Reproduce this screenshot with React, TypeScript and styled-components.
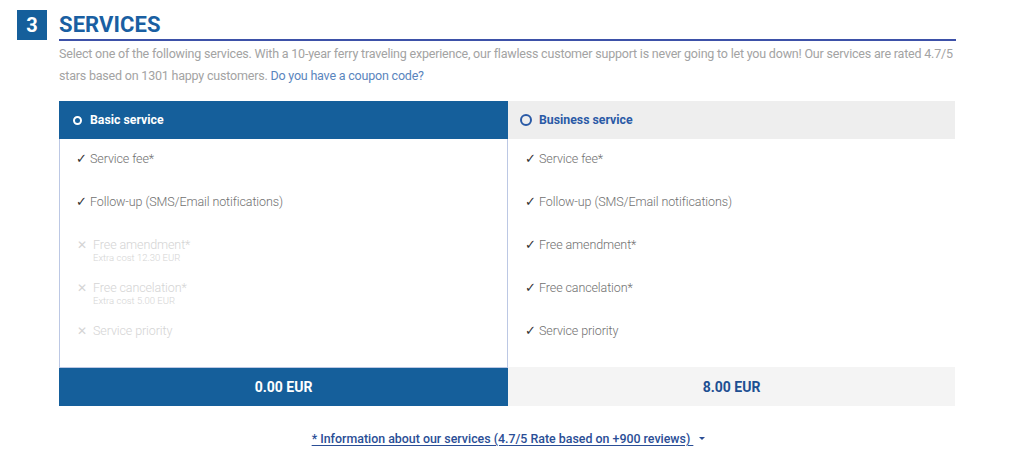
import React from "react";
import styled, { createGlobalStyle } from "styled-components";

const Global = createGlobalStyle`
  html, body { margin: 0; padding: 0; background: #fff; }
  body { font-family: Roboto, "Liberation Sans", Arial, sans-serif; }
  * { box-sizing: border-box; }
`;

const Page = styled.div`
  width: 1024px;
  height: 472px;
  padding: 10px 68px 0 17px;
  display: flex;
  gap: 12px;
  align-items: flex-start;
`;

const StepBox = styled.div`
  width: 30px;
  height: 30px;
  flex: none;
  background: #155f9b;
  color: #fff;
  font-weight: 700;
  font-size: 20px;
  display: flex;
  align-items: center;
  justify-content: center;
`;

const Content = styled.div`
  flex: 1;
  min-width: 0;
`;

const Heading = styled.h2`
  margin: 0;
  height: 29px;
  line-height: 30px;
  font-size: 22px;
  font-weight: 700;
  color: #1a5fa2;
  letter-spacing: 0.1px;
  border-bottom: 2px solid #3d51a8;
  box-sizing: content-box;
`;

const Intro = styled.p`
  margin: 2px -4px 0 0;
  font-size: 12.5px;
  letter-spacing: -0.2px;
  line-height: 22px;
  font-weight: 400;
  color: #a3a3a3;
`;

const IntroLink = styled.a`
  color: #5a85bd;
  text-decoration: none;
`;

const Plans = styled.div`
  margin-top: 14px;
  display: grid;
  grid-template-columns: 449px 448px;
`;

const Plan = styled.div<{ $active?: boolean }>`
  display: flex;
  flex-direction: column;
  border: 1px solid ${(p) => (p.$active ? "#bcc8e4" : "transparent")};
  border-left-width: ${(p) => (p.$active ? "1px" : "0")};
  border-top: none;
  ${(p) => !p.$active && "border-bottom: none;"}
`;

const PlanHeader = styled.div<{ $active?: boolean }>`
  height: 38px;
  margin: 0 ${(p) => (p.$active ? "-1px" : "0")};
  background: ${(p) => (p.$active ? "#155f9b" : "#eeeeee")};
  color: ${(p) => (p.$active ? "#fff" : "#2a5aa6")};
  display: flex;
  align-items: center;
  font-size: 12.3px;
  font-weight: 700;
`;

const RadioSlot = styled.span`
  width: 31px;
  flex: none;
  display: flex;
  justify-content: center;
  padding-left: 5px;
`;

const Radio = styled.span<{ $active?: boolean }>`
  display: block;
  width: ${(p) => (p.$active ? "9px" : "12px")};
  height: ${(p) => (p.$active ? "9px" : "12px")};
  border-radius: 50%;
  border: 2px solid ${(p) => (p.$active ? "#fff" : "#2a5aa6")};
`;

const Features = styled.ul<{ $active?: boolean }>`
  list-style: none;
  margin: 0;
  padding: 10px 0 0 ${(p) => (p.$active ? "16px" : "17px")};
  height: 228px;
`;

const Feature = styled.li`
  height: 43px;
  display: flex;
  align-items: flex-start;
`;

const Mark = styled.span<{ $ok: boolean }>`
  width: ${(p) => (p.$ok ? "14px" : "17px")};
  flex: none;
  font-size: ${(p) => (p.$ok ? "13px" : "12px")};
  line-height: 20px;
  color: ${(p) => (p.$ok ? "#333" : "#d4d4d4")};
  padding-left: ${(p) => (p.$ok ? "0" : "1px")};
`;

const FeatureText = styled.div<{ $ok: boolean }>`
  display: flex;
  flex-direction: column;
  color: ${(p) => (p.$ok ? "#707070" : "#d4d4d4")};
  font-weight: 300;
`;

const FeatureName = styled.span`
  font-size: 12.5px;
  letter-spacing: -0.1px;
  line-height: 20px;
`;

const FeatureNote = styled.span`
  font-size: 9.5px;
  line-height: 10px;
  margin-top: -2px;
`;

const Price = styled.div<{ $active?: boolean }>`
  height: 39px;
  margin: 0 ${(p) => (p.$active ? "-1px" : "0")} ${(p) => (p.$active ? "-1px" : "0")};
  background: ${(p) => (p.$active ? "#155f9b" : "#f4f4f4")};
  border-top: 1px solid ${(p) => (p.$active ? "#bcc8e4" : "#f4f4f4")};
  color: ${(p) => (p.$active ? "#fff" : "#1d4f92")};
  font-size: 14px;
  font-weight: 700;
  display: flex;
  align-items: center;
  justify-content: center;
`;

const InfoRow = styled.div`
  margin-top: 25px;
  display: flex;
  justify-content: center;
  align-items: center;
  gap: 2px;
  padding-left: 2px;
`;

const InfoLink = styled.a`
  font-size: 12.4px;
  font-weight: 500;
  color: #2a4e96;
  text-decoration: underline;
  text-underline-offset: 2px;
  white-space: pre;
`;

const Caret = styled.span`
  width: 0;
  height: 0;
  margin-left: 4px;
  border-left: 3px solid transparent;
  border-right: 3px solid transparent;
  border-top: 3px solid #2a4e96;
`;

type Item = { name: string; ok: boolean; note?: string };

const basic: Item[] = [
  { name: "Service fee*", ok: true },
  { name: "Follow-up (SMS/Email notifications)", ok: true },
  { name: "Free amendment*", ok: false, note: "Extra cost 12.30 EUR" },
  { name: "Free cancelation*", ok: false, note: "Extra cost 5.00 EUR" },
  { name: "Service priority", ok: false },
];

const business: Item[] = [
  { name: "Service fee*", ok: true },
  { name: "Follow-up (SMS/Email notifications)", ok: true },
  { name: "Free amendment*", ok: true },
  { name: "Free cancelation*", ok: true },
  { name: "Service priority", ok: true },
];

const plans = [
  { title: "Basic service", price: "0.00 EUR", items: basic, active: true },
  { title: "Business service", price: "8.00 EUR", items: business, active: false },
];

export default function App() {
  return (
    <>
      <Global />
      <Page>
        <StepBox>3</StepBox>
        <Content>
          <Heading>SERVICES</Heading>
          <Intro>
            Select one of the following services. With a 10-year ferry traveling experience, our flawless customer
            support is never going to let you down! Our services are rated 4.7/5 stars based on 1301 happy customers.{" "}
            <IntroLink href="#">Do you have a coupon code?</IntroLink>
          </Intro>
          <Plans>
            {plans.map((p) => (
              <Plan key={p.title} $active={p.active}>
                <PlanHeader $active={p.active}>
                  <RadioSlot>
                    <Radio $active={p.active} />
                  </RadioSlot>
                  {p.title}
                </PlanHeader>
                <Features $active={p.active}>
                  {p.items.map((it) => (
                    <Feature key={it.name}>
                      <Mark $ok={it.ok}>{it.ok ? "✓" : "✕"}</Mark>
                      <FeatureText $ok={it.ok}>
                        <FeatureName>{it.name}</FeatureName>
                        {it.note && <FeatureNote>{it.note}</FeatureNote>}
                      </FeatureText>
                    </Feature>
                  ))}
                </Features>
                <Price $active={p.active}>{p.price}</Price>
              </Plan>
            ))}
          </Plans>
          <InfoRow>
            <InfoLink href="#">* Information about our services (4.7/5 Rate based on +900 reviews) </InfoLink>
            <Caret />
          </InfoRow>
        </Content>
      </Page>
    </>
  );
}
